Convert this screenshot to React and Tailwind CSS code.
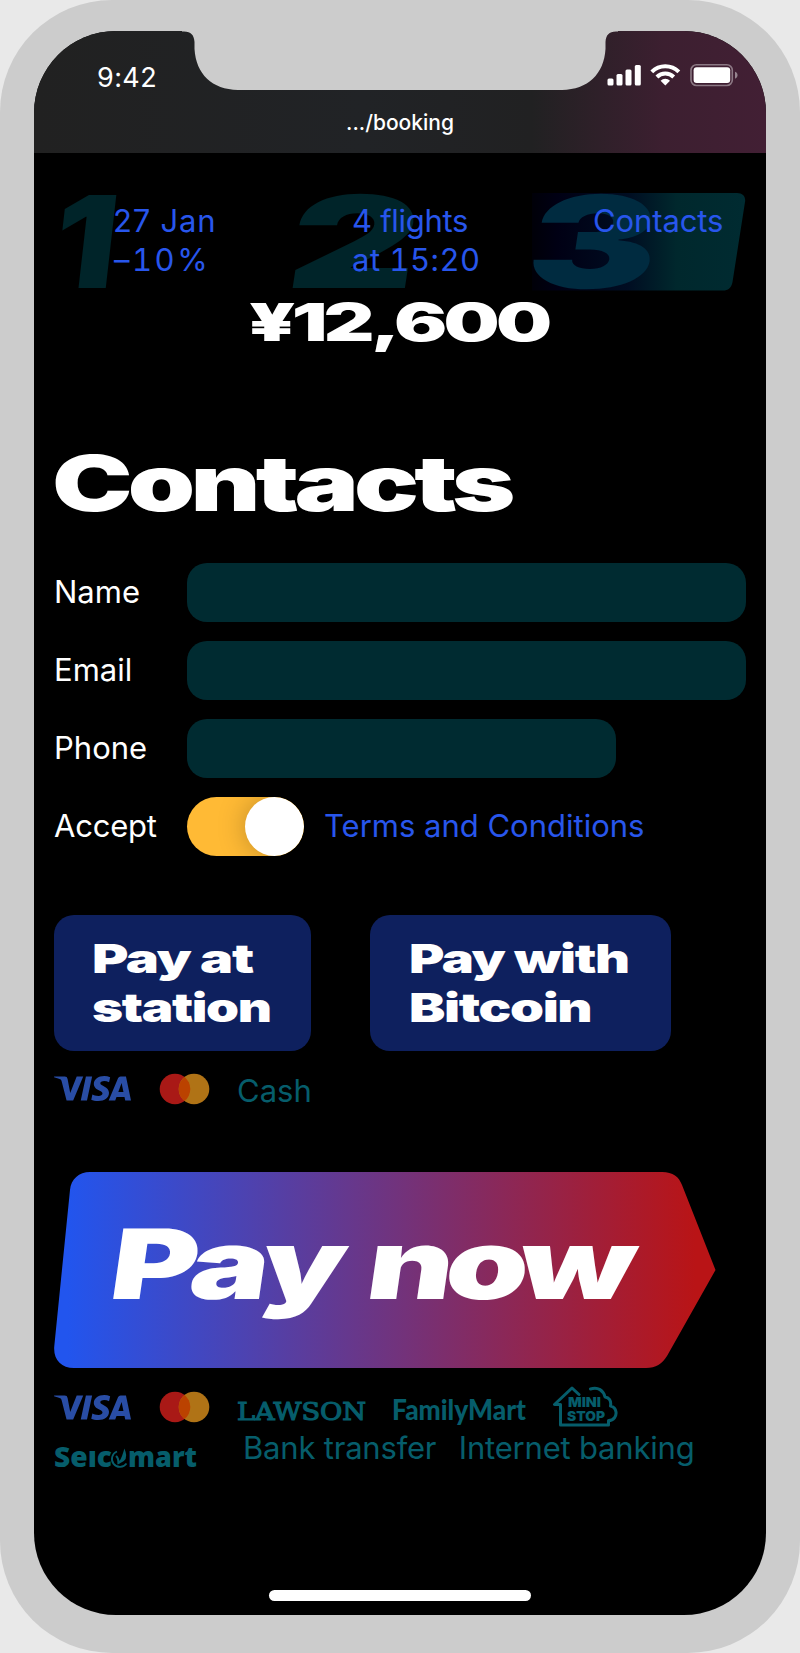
import { SiVisa } from 'react-icons/si'

const FIELDS = [
  { label: 'Name', width: 'w-[561px]' },
  { label: 'Email', width: 'w-[561px]' },
  { label: 'Phone', width: 'w-[429px]' },
]

// Extended display face: heavy Inter stretched sideways
function Wide({ children, className = '' }) {
  return (
    <span className={`inline-block origin-left whitespace-nowrap font-black ${className}`}>
      {children}
    </span>
  )
}

function StatusIcons() {
  return (
    <svg className="absolute left-[572px] top-[31.500px]" width="134" height="26" viewBox="606 62 134 26" fill="#fff">
      <rect x="607.5" y="78.5" width="6" height="7" rx="1.5" />
      <rect x="616.5" y="74" width="6" height="11.5" rx="1.5" />
      <rect x="625.5" y="69.5" width="6" height="16" rx="1.5" />
      <rect x="634.8" y="65" width="6" height="20.5" rx="1.5" />
      <g fill="none" stroke="#fff" strokeWidth="4">
        <path d="M651.8 71.8a19 19 0 0 1 27 0" />
        <path d="M656.9 77a12 12 0 0 1 16.8 0" />
      </g>
      <path d="M665.3 85.6l-4.7-4.9a6.8 6.8 0 0 1 9.4 0z" />
      <rect x="691" y="64.7" width="41.3" height="20.8" rx="5.5" fill="none" stroke="#fff" strokeOpacity=".4" strokeWidth="1.6" />
      <rect x="693.6" y="67.3" width="36.6" height="15.6" rx="3" />
      <path d="M735 71.8c3.4 1 3.4 5.900 0 6.900z" fillOpacity=".45" />
    </svg>
  )
}

function Notch() {
  return (
    <svg className="absolute left-[148px] top-0" width="436" height="60" viewBox="182 30 436 60">
      <path
        d="M182 29H618V30.500H616C609 30.500 606 34 605.500 41V48C604 73 588 88.500 562 89H238C212 88.500 196 73 194.500 48V41C194 34 191 30.500 184 30.500H182Z"
        fill="#ccc"
      />
    </svg>
  )
}

function Mastercard() {
  return (
    <svg width="51" height="32" viewBox="0 0 51 32">
      <circle cx="16" cy="16" r="15.300" fill="#a91916" />
      <circle cx="35" cy="16" r="15.300" fill="#b07316" />
      <path d="M25.500 4a15.300 15.300 0 0 1 0 24a15.300 15.300 0 0 1 0-24z" fill="#bb4200" />
    </svg>
  )
}

function MiniStop() {
  return (
    <svg width="66" height="42" viewBox="0 0 66 42" fill="none" stroke="#065d6b" strokeWidth="3" strokeLinecap="round" strokeLinejoin="round">
      <path d="M27 8.500L20 2L2.500 18.500H8.500V39H56.500V34.500C62 34.500 64.500 30 64 26C63.500 22.500 61 20.500 58.500 20C59.500 14.500 57 11.500 53 11C51.500 4.500 46 .500 38.500 3" />
      <g fill="#065d6b" stroke="none" className="font-['Inter'] text-[13.500px] font-black">
        <text x="16" y="21" textLength="33" lengthAdjust="spacingAndGlyphs">MINI</text>
        <text x="15" y="34.500" textLength="38" lengthAdjust="spacingAndGlyphs">STOP</text>
      </g>
    </svg>
  )
}

function PayNow() {
  return (
    <button className="relative block h-[196px] w-[662px]">
      <svg className="absolute inset-0" width="662" height="196" viewBox="0 0 662 196">
        <defs>
          <linearGradient id="pay">
            <stop offset=".02" stopColor="#2255ee" />
            <stop offset=".97" stopColor="#b91416" />
          </linearGradient>
        </defs>
        <path
          d="M36 0H608C619 0 625 5 628 13L661.500 98L613 184C608 192 602 196 592 196H20C7 196-1 187 .300 174L16 18C17 7 25 0 36 0Z"
          fill="url(#pay)"
        />
      </svg>
      <span className="absolute left-[58px] top-[42px] text-white">
        <Wide className="scale-x-[1.37] -skew-x-[6deg] text-[97px] leading-[100px] tracking-[-3.500px] [word-spacing:3px]">
          Pay <span className="tracking-[-6px]">now</span>
        </Wide>
      </span>
    </button>
  )
}

export default function App() {
  return (
    <div className="h-[1653px] w-[800px] bg-[#e9e9e9] font-['Inter',sans-serif]">
      <div className="h-[1653px] w-[800px] rounded-[112px] bg-[#ccc] px-[34px] pt-[30.500px]">
        <div className="relative flex h-[1584px] flex-col overflow-hidden rounded-[82px] bg-black text-[31px] font-[430] leading-[39px] text-white">
          {/* Status bar */}
          <header className="h-[122.500px] shrink-0 bg-[linear-gradient(90deg,#212121_0%,#212326_45%,#212122_68%,#3c1f30_86%,#421f34_100%)]">
            <Notch />
            <div className="absolute left-[63px] top-[27px] text-[27px] tracking-[.4px]">9:42</div>
            <StatusIcons />
            <div className="pt-[72px] text-center text-[21px] font-medium">.../booking</div>
          </header>

          <main className="flex flex-col px-5 pt-[39.500px]">
            {/* Steps */}
            <nav className="flex h-[98px] text-[#2856ec]">
              <div className="relative w-[238px] pl-[59px] pt-2">
                <div className="absolute left-[1px] top-0 text-[#002429]">
                  <Wide className="scale-x-[1.08] -skew-x-[6deg] text-[128px] leading-[98px]">1</Wide>
                </div>
                <div className="relative tracking-[.8px]">27 Jan</div>
                <div className="relative left-px tracking-[2.5px] tabular-nums">–10%</div>
              </div>
              <div className="relative w-[240px] pl-[60px] pt-2">
                <div className="absolute left-[-2px] top-0 text-[#002429]">
                  <Wide className="scale-x-[1.57] -skew-x-[5.5deg] text-[128px] leading-[98px]">2</Wide>
                </div>
                <div className="relative tracking-[-.3px]">4 flights</div>
                <div className="relative tracking-[.5px] tabular-nums">at 15:20</div>
              </div>
              <div className="relative w-[214px] pl-[61px] pt-2">
                <svg className="absolute left-0 top-0" width="214" height="98" viewBox="0 0 214 98">
                  <defs>
                    <linearGradient id="step">
                      <stop offset="0" stopColor="#000008" />
                      <stop offset=".12" stopColor="#000014" />
                      <stop offset=".45" stopColor="#000d22" />
                      <stop offset=".68" stopColor="#00282d" />
                      <stop offset="1" stopColor="#002b31" />
                    </linearGradient>
                  </defs>
                  <path d="M0 0H205C211 0 214 4 213 9L200.500 89C199.500 95 196 97.500 191 97.500H0Z" fill="url(#step)" />
                </svg>
                <div className="absolute left-[-3px] top-0 text-[#002b40]">
                  <Wide className="scale-x-[1.52] -skew-x-[5.5deg] text-[128px] leading-[98px]">3</Wide>
                </div>
                <div className="relative tracking-[-.1px]">Contacts</div>
              </div>
            </nav>

            <div className="pl-[195px] text-[52px] leading-[63px]">
              <Wide className="scale-x-[1.52] tracking-[-2.500px]">¥12,600</Wide>
            </div>

            {/* Form */}
            <h1 className="-ml-[2px] mt-[89px] h-[80px] text-[77px] leading-[80px]">
              <Wide className="scale-x-[1.4] tracking-[-3.400px]">Contacts</Wide>
            </h1>
            <form className="mt-[40.500px] flex flex-col gap-[19px]">
              {FIELDS.map((f) => (
                <label key={f.label} className="flex h-[59px] items-center">
                  <span className="w-[133px] pb-[3px]">{f.label}</span>
                  <span className={`h-full rounded-[20px] bg-[#002b31] ${f.width}`} />
                </label>
              ))}
              <label className="flex h-[59px] items-center">
                <span className="w-[133px] pb-[3px] tracking-[-.2px]">Accept</span>
                <span className="flex h-full w-[117px] justify-end overflow-hidden rounded-full bg-[#ffba35]">
                  <span className="h-[59px] w-[59px] rounded-full bg-white shadow-[0_0_28px_rgba(0,0,0,0.25)]" />
                </span>
                <a className="pb-[3px] pl-5 text-[#2856ec]">Terms and Conditions</a>
              </label>
            </form>

            {/* Secondary payments */}
            <div className="mt-[59px] flex gap-[59px] text-[40px] leading-[49px] tracking-[-1px]">
              <button className="flex h-[136px] w-[257px] flex-col items-start justify-center rounded-[20px] bg-[#0e205e] pl-[38px]">
                <Wide className="scale-x-[1.39]">Pay at</Wide>
                <Wide className="scale-x-[1.32]">station</Wide>
              </button>
              <button className="flex h-[136px] w-[301px] flex-col items-start justify-center rounded-[20px] bg-[#0e205e] pl-[39px]">
                <Wide className="scale-x-[1.35]">Pay with</Wide>
                <Wide className="scale-x-[1.36]">Bitcoin</Wide>
              </button>
            </div>
            <div className="mt-[18px] flex h-[39px] items-center text-[#065d6b]">
              <SiVisa className="h-[77px] w-[77px] text-[#294da5]" />
              <div className="ml-[28px]"><Mastercard /></div>
              <span className="ml-[27px] pt-1">Cash</span>
            </div>

            {/* Primary payment */}
            <div className="mt-[64px]"><PayNow /></div>
            <div className="mt-[18px] flex h-[42px] items-center text-[#065d6b]">
              <SiVisa className="h-[77px] w-[77px] text-[#294da5]" />
              <div className="ml-[28px]"><Mastercard /></div>
              <svg className="ml-[25px] mt-[5px]" width="134" height="38" viewBox="0 0 134 38" fill="#065d6b" stroke="#065d6b" strokeWidth="1.200">
                <text x="2" y="28.500" textLength="129" lengthAdjust="spacingAndGlyphs" className="font-['DejaVu_Serif'] text-[25px]">LAWSON</text>
              </svg>
              <svg className="ml-[21px] mt-[7px] overflow-visible" width="142" height="42" viewBox="0 0 142 42" fill="#065d6b">
                <text x="2" y="30" textLength="134" lengthAdjust="spacingAndGlyphs" className="font-['Lato'] text-[28px] font-black">FamilyMart</text>
              </svg>
              <div className="ml-5"><MiniStop /></div>
            </div>
            <div className="flex h-[39px] text-[#065d6b]">
              <svg className="mt-[5px]" width="148" height="44" viewBox="0 0 148 44" fill="#065d6b">
                <g className="font-['Open_Sans'] text-[28px] font-extrabold">
                  <text x="0" y="33.500" textLength="58" lengthAdjust="spacingAndGlyphs">Seıc</text>
                  <text x="74" y="33.500" textLength="69" lengthAdjust="spacingAndGlyphs">mart</text>
                </g>
                <g fill="none" stroke="#065d6b">
                  <path d="M63 18.500a8 8 0 1 0 9.500 12" strokeWidth="1.800" />
                  <path d="M62 23q2.500 2 2.500 7q3-1 6-11q2.500 7-4.500 10" strokeWidth="2.200" />
                </g>
              </svg>
              <span className="ml-[41px] tracking-[-.2px]">Bank transfer</span>
              <span className="ml-[22.500px] tracking-[-.2px]">Internet banking</span>
            </div>
          </main>

          <div className="absolute bottom-[14px] left-[235px] h-[11px] w-[262px] rounded-full bg-white" />
        </div>
      </div>
    </div>
  )
}
